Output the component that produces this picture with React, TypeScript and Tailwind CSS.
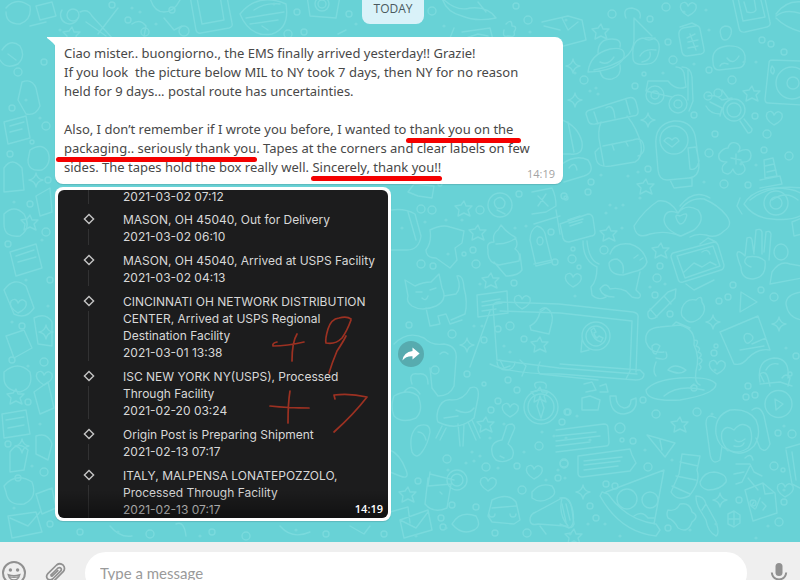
import React from 'react';

/* Large wallpaper drawings, in wallpaper coordinates. */
const doodles: string[] = [
  // phone, top centre
  'M190 -4l6 34q1 4 5 3l28-5q4-1 3-5l-6-31M197 -2l5 26 22-4-4-24',
  // wrench cross
  'M80 12q8-4 12 4l22 24M98 34l20-26M86 22l20 14M62 10a9 9 0 1 0 16 8',
  // melon
  'M240 14q18-22 46-10q4 24-14 30q-22 4-32-20M246 18l38-6M250 24l28-4M254 10q12-8 26-6',
  // camera
  'M307 -4l3 20 26 2 4-22M315 4a7 7 0 1 0 14 0a7 7 0 1 0-14 0M318 4a4 4 0 1 0 8 0a4 4 0 1 0-8 0',
  // mouse
  'M442 -2q14 14 28 10q18-2 26 10q-20 4-34-2q-16-4-20-18M478 2l8 10',
  // envelope
  'M462 32l28-4 3 12M466 38l12-4 10 2M454 28l-4 10M506 24q6-6 6 2q6 0 2 6q2 6-6 4q-6 2-4-6',
  // hat and basket
  'M542 22l26-6 14 4 4 20-30 8M562 18l6 12 10-8M544 26l16 4',
  // ufo
  'M588 72q2-18 22-23q16-3 14 8q-6 14-36 15M598 53q0-14 14-14q10 0 8 8M600 71q2 10 12 8q10-3 8-14M600 62q8 4 14-5',
  // cherry
  'M634 18l0 22q0 22-40 30M634 18l18 18M626 18q-4-10 6-10q10 2 8 10M633 58q-2-20 12-20q16-2 14 12q-2 14-12 14q-14 2-14-6M640 56q4-8 16-6M643 38q6 4 12 0M642 62q10-2 8-10',
  // soda can
  'M679 36l3 16q1 4 5 4l14-2q4-1 3-5l-4-20q-1-4-5-3l-12 2q-5 2-4 8M680 27l12-4 6 3M687 38l8-4M688 42l10-2M688 48l10-2M690 34l6 16',
  // tablet
  'M732 -4l7 32q1 5 6 4l22-5q4-1 3-5l-6-28M738 -2l5 23 22-4-5-21M744 2l3 10q7 2 9-2l-2-12',
  // shell
  'M776 14q10-14 26-12M776 16q10-8 26-2M776 18q10 10 26 14',
  // brain
  'M713 62q-2-14 14-16q16-1 18 10q1 12-8 12l-18 2q-6 0-6-8M727 58q6 8 12-2M720 66q2-4 8-2',
  'M721 36q-3-8 4-10q8 0 6 8q-2 6-6 6q-3 0-4-4',
  // record player
  'M802 61l-30-1q-3 0-3 3l-4 36q0 4 3 4l34 2M776 83a16 16 0 1 0 32 0a16 16 0 1 0-32 0M787 83a6 6 0 1 0 12 0a6 6 0 1 0-12 0M772 66q4 4 1 8q-4-2-1-8',
  // roller skate
  'M648 81l20 0q8 10 18 6l-2-14q-2-6-8-6M648 81l-2 10 26 6M646 95a9 9 0 1 0 18 0a9 9 0 1 0-18 0M669 104a9 9 0 1 0 18 0a9 9 0 1 0-18 0M651 95a4 4 0 1 0 8 0a4 4 0 1 0-8 0M674 104a4 4 0 1 0 8 0a4 4 0 1 0-8 0M682 67q9 0 10 10l1 24-4 10M688 70l0 30',
  // backpack
  'M590 110l38-12q6-2 8 4l2 8q1 6-5 6l-38 8q-6 1-7-4l-2-6q0-3 4-4M594 112l4 12M626 100l4 14M606 108q6-4 8 4l1 6',
  'M601 122q-4 10-1 22l4 22M627 116q10 12 14 28q2 14-6 18l-24 4q-14 2-15-8l-1-6 4-4M603 146l30-6q10-4 11 8q0 6-6 8M612 144l2 6M626 142l2 4',
  // astronaut
  'M660 140a13 13 0 1 0 28 0a13 13 0 1 0-28 0M656 146q-2-22 18-25q20-1 22 20l3 24q0 12-10 13l-22 2q-8 0-9-10zM664 141q4-6 8-1q4-5 7 1l-7 6zM688 148l8-1 3 14q-2 10-9 8zM670 180l4 8 18-2 0-8',
  // ladle and gear
  'M708 96q8-2 14 4l10-2M710 102l12 6-2 8M706 106q4 8 14 8M722 90l6 8M723 110a11 11 0 1 0 22 0a11 11 0 1 0-22 0M727 110a7 7 0 1 0 14 0a7 7 0 1 0-14 0M740 121l8 12q4 0 4-4l-8-10M704 96a4 4 0 1 0 8 0a4 4 0 1 0-8 0M714 93a4 4 0 1 0 8 0a4 4 0 1 0-8 0',
  // flower
  'M728 148q2-8 10-4q4 4 0 8q12-6 13 3q0 8-10 7q8 8 0 12q-6 2-8-5q-4 8-10 3q-3-6 4-10q-10 0-8-8q4-6 9-6M731 158l10 2M736 154l0 10',
  // lighthouse
  'M764 160l9-2 4 18-12 2zM765 166l9-2M767 172l9-2M760 180l20-4 2 8-22 4M750 200q20-16 52-12M772 200q14-10 26 0',
  // surf board and pumpkin, beside the bubble
  'M562 120q16 6 20 22q2 14-12 12l-8 0M568 122l6 30M562 164q14-10 26-4q8 12-4 16l-20 6M569 168q6-8 8 2',
  // book
  'M560 224l28-10q4 0 5 4l2 14q0 4-4 4l-22 6q-5 0-6-4zM568 220l12-4M569 223l14-4M570 226l12-4',
  'M534 224l26-8M556 210l4 24',
  // heart hands
  'M634 226q10-16 24-25q12-2 20 12q10-16 26-14q14 6 22 16q8 10-2 16q-8 8-18 4q-10-2-16 2M634 226q2 14 16 8q16-4 30 2M681 236q-16-6-17-16q1-12 14-7q8-10 20-3q8 10-4 20zM678 222q-5-9 2-6q9-5 6 2q-2 6-6 6zM680 206q14-18 30-8',
  // donut eye
  'M744 204q8-14 30-16q20 0 28 6M744 204q10 14 28 15q20 2 30-4M764 203a12 12 0 1 0 24 0a12 12 0 1 0-24 0M770 203a6 6 0 1 0 12 0a6 6 0 1 0-12 0M740 198l-3 8 5 8',
  // puppy
  'M583 241q0 20 14 26q0 14-6 20l1 8q6 6 14 2M587 241q2 20 12 23M610 254q4-12 20-10q14 4 17 18q-2 8-14 10l-10 3q-14 0-14-12q2-4 8-4q8 4 6 14M640 272l-4 18 4 4q2 6-8 3l-6-6q-8-4-16-2q-4-8-10 0q2 8 14 8M634 258l4-3M640 260l3-2',
  // photo frame
  'M673 253l41-11q3 0 4 3l6 20q0 4-3 5l-38 12q-4 1-5-3l-7-22q0-3 2-4M677 256l36-10 7 20-35 12zM684 272l10-9 8 4 8-5 6 3M702 252q6-4 8 2M686 284l8 6 20-10M700 244l8-6 8 4',
  // rock sign hand
  'M745 256l2-18q4-2 5 2l2 14M754 252l2-22q5-2 6 2l0 22M764 252l2-20q4-2 5 2l-2 26M745 256q-8-8-8-1q2 8 4 12q0 12 12 12q14-2 12-18q-6-6-18-4q-6 6 4 10',
  // person
  'M774 252a7 8 0 1 0 14 0a7 8 0 1 0-14 0M770 284l2-12q8-12 18-8l12 2M770 284l32-6',
  // box and jar
  'M802 218l-10 4 2 14 8-2M802 292q-16 2-16 12q2 14 16 16',
  // laptop
  'M490 311l-20 56M493 306q1-4 6-4l60 2 74 8q6 1 5 6l-2 54M500 311l60 2 72 8-2 50-4 8M493 306l4 54 62 8 78 6M490 364q20 10 70 10l76 6q8 0 8-6l-4-4-80-6',
  'M582 336a14 14 0 1 0 28 0a14 14 0 1 0-28 0M586 336a10 10 0 1 0 20 0a10 10 0 1 0-20 0M582 340l-1 12 8-2M591 330q2 10 10 12l2-4-4-2-2 2q-3-2-3-5l2-1-2-4z',
  // pencil
  'M648 312l20-20 8-3-1 9-20 20q-8 3-7-6M650 309l7 8M664 296l7 8',
  // lemon
  'M682 308q4-10 14-8q6-6 6 2q6 8-2 16q-10 8-16 0q-4-2-2-10',
  // play
  'M741 292l16 10-17 10z',
  // dino
  'M646 342q-2-14 14-15l20-2q16 4 14 20q6 12 2 26q-2 12 4 14M646 342q4 12 18 10M652 346q4-4 8 0l-4 8q-4 0-4-8M666 352q4 10-10 6M656 362q-4 10 0 14M668 370q6-8 18 0q-6 6-18 0M672 326l4-4 14 6M694 340q6 0 2 6q6 2 2 6q6 2 1 6q6 2 0 6q4 4 0 6',
  // map
  'M720 332l38-16 12 34q-12-2-22 8q-6 8-14 6zM744 338q0-6 6-4q6 4 0 8q-4 4-6-4M752 344l14-6M740 350l24-4',
  // headphones
  'M760 382q-4-22 14-24q16 0 14 20M764 382l-4-8q6-4 8 4l2 8M782 378q4-6 8 0l-2 8M766 370q4-8 12-6',
  // t-shirt bird
  'M426 250q6-8 4-20q12-6 20-3l14 4-2 12-7 5 2 12-7 8-14-10q-10 0-10-8',
  // cupcake
  'M488 250q-2-8 6-8q-2-8 4-12l3-5q6 8 14 12q4 8 0 12q6 4 4 12l-20 4q-12-2-11-15M494 262l12 14q12 0 16-6l-2-16M496 244q12 0 20-6',
  // crayon
  'M530 240q0-10 7-14q8 2 9 12l6 24-16 4zM537 241a3 4 0 1 0 6 0a3 4 0 1 0-6 0M534 264l18-4',
  // cat
  'M408 296l-3-16 10 6q8-4 16-4l8-8 3 14q6 12-6 18q-14 6-24 0q-6-4-4-10M416 292l6 0M430 290l6-2M422 298q4 4 6-2M444 296l12-2q6-6 1-18q6-2 7 12q4 14 1 26l-14 6M426 308l4 18 10-2-2-8 8-2 4 10 12-4',
  // note and frame
  'M477 295l30-4 1 22-30 4zM482 302l18-3M482 306l20-3M482 311l14-2',
  // bell
  'M530 326q8-4 10-14l6-4q8 4 6 14l-3 12-18-4zM540 310q4-4 8-1',
  // medal and gem
  'M488 205a11 11 0 1 0 24 0a11 11 0 1 0-24 0M495 200q6-6 10 2q0 8-8 6q-4-4-2-8M497 210l8 4',
  'M532 192l20-4q4 8 4 18l-10 6-14 2M538 196l10 10M546 194l-8 12M408 192l6-8 20 2-2 12-14-2z',
  // bread
  'M391 210q14-2 24 4l6 22q-2 14-14 14l-16 0M408 212l8 28',
  // bull
  'M394 344q14-14 30-6q8 8 20 6q14 2 12 16l-2 26q-4 10-16 10l-6-8-2-20M440 354q4-4 8 0',
  // pot
  'M394 396q14-8 24 0q6 14-2 22q-14 6-22-2q-4-10 0-20M412 384q-4-12 6-10q10-2 10 10M404 392q8-10 16 2',
  // chair
  'M438 410q4-12 14-10q12 0 18-12q10-4 8 10l-4 20q-16 14-36 4q-2-4 0-12M444 418l14-2M456 410q12 6 18-2M442 426l-6 12M446 428l-6 12M458 424l2 22M464 424l-1 22M468 422l8 18M472 420l8 18',
  // compass
  'M524 407a17 17 0 1 0 34 0a17 17 0 1 0-34 0M528 407a13 13 0 1 0 26 0a13 13 0 1 0-26 0M540 396l4 12-3 10-4-12zM536 388q-4-6 4-6q8 0 6 6',
  // guitar
  'M492 452q-2-10 10-12l4-12q0-4 6-4q4 2 2 6l-6 14q8 6 4 14q-8 6-16 2q-4-4-4-8M500 456l4 2',
  // lamp
  'M497 362a9 8 0 1 0 18 0M500 360l4 8 6-2M520 360l6 6-4 10',
  // flip flops
  'M412 452q-4-18 6-26q12-4 12 6q-2 12-8 20q-6 8-10 0M418 432q6 0 8 8M390 450q10 4 16 20q4 10-6 6l-10-4',
  // drink
  'M428 478l-3 26q8 10 22 4l4-24M430 472l-2 14 24-2M430 474l24 6M447 480a10 10 0 1 0 20 0a10 10 0 1 0-20 0M451 480a6 6 0 1 0 12 0a6 6 0 1 0-12 0M440 492l2 2',
  // camper
  'M488 516l4-16q16-8 24 2q2 8 4 18l-6 4-22-2zM492 508l24-2M489 514a3 3 0 1 0 6 0M510 514a3 3 0 1 0 6 0',
  // megaphone
  'M530 520q0-6 6-8l26-14q8-2 10 12l2 14q-2 6-8 2l-28-2q-8 2-8-4M562 498q-4 16 6 28M540 526l6 8M566 504l4 16',
  // stone
  'M532 492q8-10 20-6q6 8-2 12q-10 6-18 0zM452 524q8-14 24-8q6 10-2 14q-12 6-22-6',
  // cube box
  'M390 512l18-5 2 16M400 520l28-10 4 20-28 8zM400 520l16 8 12-16',
  // books
  'M540 362q-4 8 0 12l58 6M556 430l48-6q4 0 4 4l1 14q0 4-3 4l-50 6M556 436l40-4M556 441l44-5M556 446l34-4',
  'M578 456l52-7 2 6 4 8-6 8-48 6q-4 0-4-4zM584 461l38-4M584 465l36-4M584 470l34-4',
  'M584 384l8-2 4 8-10 2M600 386l6-2 2 8-8 0M582 398l8-2 10 4-2 10-16 0z',
  // horse shoe
  'M610 396q0 18 14 18q14-2 12-16l-5 2q0 8-7 8q-8-2-8-12z',
  // plate
  'M646 390q8-10 34-12q30-2 36 6q0 10-36 16q-34 2-34-10M664 396q14-12 40-6M690 388l4-4',
  // party cone
  'M647 435l28 8-10 14zM660 440l2 10',
  // sloth
  'M716 434q-2-18 14-24q18-2 26 10q6 14-2 26q-12 12-26 4q-10-4-12-16M722 432q4-8 12-2q8-10 16-2q4 12-2 20q-12 8-22 0q-6-8-4-16M735 440q4 4 10-1M734 446q8 2 10-3M716 418q-10-6-10 6l4 30q2 12 10 6l2-14M752 410q8-6 12 6l6 28q-4 10-10 4l-4-10',
  // play disc
  'M765 404a13 13 0 1 0 27 0a13 13 0 1 0-27 0M775 399l8 5-7 6zM760 384l20-2 12 4',
  // pizza
  'M600 496q20 36 56 40l4-6-4-6q-30-4-48-30l-6-2zM606 492l58-22-10 54M617 499a10 10 0 1 0 20 0a10 10 0 1 0-20 0M642 500a8 8 0 1 0 16 0a8 8 0 1 0-16 0M634 516q8-6 14 2l6 0',
  // sock
  'M682 454l18 2-3 14q4 12-8 26q-12 6-18-4l8-18zM680 462l18 4M676 476l20 4M672 486l18 8',
  // fried egg, mitten
  'M700 482q4-10 14-10q14 2 12 10q-6 8-18 8q-8-2-8-8M668 510q8 2 12-6q10-2 12 8q8 4 0 10q-4 12-14 6q-4-8-10-10q-2-4 0-8',
  // brush
  'M696 496q8 0 10 8l10 18q4 12 0 14q-8-4-10-16l-6-10q-4-6-4-14M706 504l-4 6',
  // runner
  'M745 458q6-6 8 2M736 464l14 0 4 8 8 4M750 466l-8 16-6 2M748 478l10 12M734 474l10-2',
  // document
  'M745 490l18-7 12 10 2 20-24 8zM763 484l2 10 8-1M754 502l-3 4 4 3M762 502l4 4-3 4M756 508l4-10',
  // sugar
  'M728 514l6-3 6 4 0 8-6 4-6-3zM734 511l0 14M728 519l12 0M560 498q10-2 13 14q2 14-4 16l-9-4M562 504l4 18',
  'M786 448l14-4M786 450l6 34 8 4M792 452l4 28',
  // left edge
  'M2 50q8-12 18-4q6 10-2 18q-12 6-18-4M8 54l8 6M22 82q10-4 14 6l4 18q-4 10-14 8l-8-14zM4 122l22-6 4 22-22 6zM10 126l14-4M10 132l12-3',
  'M30 150q12-8 18 2q4 12-6 18q-14 2-14-10zM4 168q8-12 18 0l2 22-20 2zM36 196l14-8 2 24-12 4z',
  'M4 214q10-10 20 0q8 14-4 22q-16 2-16-12zM10 252l26-8 6 24-26 8zM16 256l18-6M18 262l18-5M4 290q10-14 22-4l8 22q-8 12-20 6z',
  'M34 318q12-6 18 4l0 24-14-2zM6 336l18-6 8 18-18 10zM4 372q14-12 26 0q4 16-10 20q-16-2-16-14zM34 392l14-10 6 26-14 6z',
  'M2 414l24-4 4 24-26 4zM6 420l18-3M8 428l16-3M10 452q8-12 18-2l-4 20-14 2zM36 436q12-4 16 8l-4 16-12-6z',
  'M4 486q12-14 28-4q6 16-8 22q-16 2-18-12zM36 494l16-6 4 20-14 6zM8 516l28-4 6 20-30 6zM10 518l18 8 12-14',
  'M6 8q10-12 24-2q2 14-10 18q-14 0-14-12M30 26l16-4M36 6l16-4 4 14-16 4z',
  'M150 -2q4 14 14 14t16-12M164 18l10 12 8-4M132 24q8-6 14 2l-2 10M262 26l6 4M346 30l-8 4M110 526q10 12 22 10M176 524q8-4 10 12M280 526q12 14 30 6M350 526l14 8 6-8',
];

/* Small rings: x, y, radius. */
const rings: number[][] = [
  [612, 14, 4], [650, 19, 3], [666, 7, 4], [668, 42, 3], [673, 60, 4], [584, 80, 4], [635, 86, 3], [644, 74, 2], [709, 70, 3], [732, 80, 4],
  [762, 40, 3], [771, 44, 3], [784, 52, 3], [694, 115, 3], [755, 116, 3], [767, 134, 4], [709, 153, 4], [715, 134, 3], [764, 150, 3], [789, 156, 4],
  [724, 184, 4], [748, 185, 3], [591, 182, 3], [648, 169, 3], [588, 192, 3], [564, 196, 3], [604, 250, 4], [572, 259, 4], [579, 267, 2], [573, 249, 2],
  [660, 266, 3], [657, 278, 4], [655, 295, 3], [733, 285, 3], [761, 290, 3], [728, 297, 3], [719, 301, 3], [774, 297, 4], [670, 314, 3], [748, 386, 3],
  [746, 397, 3], [755, 395, 3], [694, 388, 3], [697, 412, 4], [620, 428, 5], [643, 400, 3], [656, 414, 4], [633, 441, 3], [622, 440, 2], [564, 464, 4],
  [568, 412, 3], [648, 467, 4], [774, 466, 4], [783, 470, 2], [792, 434, 4], [778, 433, 3], [606, 484, 3], [615, 486, 3], [590, 506, 3], [596, 518, 3],
  [668, 528, 3], [739, 500, 3], [753, 503, 3], [779, 522, 4], [784, 502, 3], [421, 209, 4], [432, 210, 4], [480, 210, 4], [519, 194, 3], [473, 250, 3],
  [476, 264, 4], [421, 264, 4], [433, 266, 3], [464, 254, 2], [514, 283, 3], [409, 325, 3], [510, 326, 4], [498, 329, 3], [452, 334, 4], [484, 340, 3],
  [524, 339, 3], [551, 232, 3], [555, 262, 3], [566, 198, 2], [435, 370, 4], [467, 374, 3], [508, 380, 3], [517, 390, 3], [498, 401, 3], [491, 410, 3],
  [484, 384, 2], [567, 412, 3], [562, 422, 3], [539, 446, 4], [486, 467, 4], [517, 466, 3], [522, 490, 4], [564, 463, 4], [558, 478, 3], [447, 459, 4],
  [418, 481, 3], [452, 505, 3], [441, 518, 3], [443, 527, 3], [476, 507, 3], [495, 533, 3], [527, 533, 4], [73, 15, 6], [128, 20, 3], [145, 32, 4],
  [172, 10, 3], [184, 31, 5], [288, 34, 4], [297, 12, 3], [304, 32, 3], [432, 11, 4], [528, 20, 4], [516, 6, 3], [349, 14, 3], [112, 5, 3],
  [18, 72, 4], [44, 62, 3], [12, 108, 3], [46, 126, 4], [32, 142, 2], [10, 154, 3], [48, 180, 3], [30, 204, 3], [46, 232, 4], [8, 244, 3],
  [50, 280, 3], [22, 326, 3], [44, 362, 4], [12, 360, 3], [28, 402, 3], [8, 444, 3], [44, 472, 4], [18, 478, 3], [50, 524, 3], [80, 532, 3],
  [150, 534, 4], [212, 532, 3], [246, 536, 4], [326, 534, 3], [384, 534, 3], [440, 184, 2], [790, 374, 2], [796, 356, 3], [716, 346, 2], [714, 353, 3],
];

/* Filled specks. */
const specks: number[][] = [
  [566, 20], [575, 73], [590, 91], [598, 94], [596, 88], [663, 73], [694, 64], [709, 30], [756, 62], [684, 12], [706, 10], [744, 62],
  [601, 175], [638, 172], [628, 176], [704, 182], [756, 165], [741, 164], [606, 213], [610, 205], [616, 208], [623, 205], [622, 228], [640, 198],
  [665, 284], [650, 287], [575, 296], [715, 370], [786, 348], [712, 414], [577, 416], [590, 440], [645, 450], [672, 460], [728, 450], [784, 426],
  [565, 478], [588, 524], [605, 524], [690, 530], [768, 526], [756, 538], [784, 490], [402, 228], [425, 222], [446, 220], [462, 220], [480, 284],
  [526, 226], [448, 254], [515, 228], [474, 326], [482, 326], [504, 346], [510, 352], [524, 452], [490, 438], [504, 424], [472, 452], [480, 456],
  [474, 461], [466, 463], [448, 470], [554, 436], [542, 432], [558, 470], [566, 438], [446, 528], [498, 468], [546, 480], [132, 8], [156, 24],
  [140, 12], [274, 4], [356, 24], [444, 26], [530, 32], [60, 30], [26, 100], [40, 118], [14, 202], [42, 240], [26, 280], [48, 306],
  [12, 322], [28, 366], [40, 424], [32, 466], [14, 508], [118, 532], [200, 536], [296, 530], [416, 536], [570, 534], [620, 536], [716, 524],
];

/* Stars, sparkles and hearts. */
const stars = [[601, 31], [752, 93], [478, 232], [491, 280], [609, 233], [661, 250], [486, 424], [408, 494], [646, 186], [680, 424], [464, 208], [540, 344], [540, 394], [574, 536], [30, 222], [16, 396], [72, 34]];
const sparkles = [[573, 66], [575, 100], [648, 120], [713, 322], [779, 324], [583, 492], [720, 500], [467, 345], [36, 180], [46, 332], [22, 446]];
const hearts = [[688, 9], [774, 118], [573, 280], [717, 367], [522, 302], [510, 410], [534, 472], [488, 484], [785, 490], [18, 306], [44, 378]];

function Wallpaper() {
  return (
    <svg
      className="absolute inset-0 -z-10 h-full w-full"
      viewBox="0 0 800 542"
      preserveAspectRatio="xMidYMid slice"
      fill="none"
      stroke="#7adadd"
      strokeWidth="1.4"
      strokeLinecap="round"
      strokeLinejoin="round"
      aria-hidden="true"
    >
      {doodles.map((d, i) => (
        <path key={i} d={d} />
      ))}
      {rings.map(([x, y, r], i) => (
        <circle key={i} cx={x} cy={y} r={r} />
      ))}
      {specks.map(([x, y], i) => (
        <circle key={i} cx={x} cy={y} r="1.6" fill="#77d8db" stroke="none" />
      ))}
      {stars.map(([x, y], i) => (
        <path key={i} d={`M${x} ${y - 7}l2 5 6 0-4 4 2 6-6-3-6 3 1-6-4-4 6-1z`} />
      ))}
      {sparkles.map(([x, y], i) => (
        <path key={i} d={`M${x} ${y - 7}q1 6 7 7q-6 1-7 7q-1-6-7-7q6-1 7-7z`} />
      ))}
      {hearts.map(([x, y], i) => (
        <path key={i} d={`M${x} ${y + 7}q-10-6-7-12q5-4 7 2q4-6 8-1q2 6-8 11z`} />
      ))}
    </svg>
  );
}

/* Text with a thick red stroke under it; `reach` sets how far the stroke runs past each end. */
function Marked({ reach, children }: { reach: string; children: React.ReactNode }) {
  return (
    <span className={`relative after:absolute after:top-full after:h-[5px] after:rounded-full after:bg-[#f50000] ${reach}`}>
      {children}
    </span>
  );
}

const events: string[][] = [
  ['MASON, OH 45040, Out for Delivery', '2021-03-02 06:10'],
  ['MASON, OH 45040, Arrived at USPS Facility', '2021-03-02 04:13'],
  ['CINCINNATI OH NETWORK DISTRIBUTION', 'CENTER, Arrived at USPS Regional', 'Destination Facility', '2021-03-01 13:38'],
  ['ISC NEW YORK NY(USPS), Processed', 'Through Facility', '2021-02-20 03:24'],
  ['Origin Post is Preparing Shipment', '2021-02-13 07:17'],
  ['ITALY, MALPENSA LONATEPOZZOLO,', 'Processed Through Facility', '2021-02-13 07:17'],
];

function TrackingPhoto() {
  return (
    <div className="relative flex flex-col gap-[7px] overflow-hidden rounded-md bg-[#1c1c1d] font-['Inter','Liberation_Sans',sans-serif] text-xs leading-[17px] text-[#d8d8d8]">
      <div className="flex leading-[14px]">
        <div className="flex w-[65px] shrink-0 justify-center pr-1">
          <div className="w-px bg-[#323233]" />
        </div>
        2021-03-02 07:12
      </div>
      {events.map((lines, i) => (
        <div key={i} className="flex">
          <div className="flex w-[65px] shrink-0 flex-col items-center pr-1">
            <svg className="mt-[2px] h-3 w-3 shrink-0" viewBox="0 0 12 12" fill="none" stroke="#c4c4c4" strokeWidth="1.4" aria-hidden="true">
              <path d="M6 1.4L10.6 6 6 10.6 1.4 6z" />
            </svg>
            <div className="mt-1 w-px grow bg-[#323233]" />
          </div>
          <div>
            {lines.map((line) => (
              <div key={line} className="whitespace-nowrap">
                {line}
              </div>
            ))}
          </div>
        </div>
      ))}
      <div className="absolute inset-x-0 bottom-0 h-7 bg-gradient-to-t from-black/40 to-transparent" />
      <svg className="absolute inset-0 h-full w-full" viewBox="0 0 330 328" fill="none" stroke="#9c3122" strokeWidth="1.7" strokeLinecap="round" strokeLinejoin="round" aria-hidden="true">
        <path d="M219 152q-5 1-4 4q14 0 31-4M239 144q-5 8-5 27" />
        <path d="M293 129q-4-3-12-1-8 1-11 11-3 10-2 14 9 2 16-5 5-7 9-18M288 146q-3 6-9 15-5 12-8 22" />
        <path d="M212 216q18 2 39 2M232 201q-2 12-2 32" />
        <path d="M277 209l-1-4q16-2 33 2-13 17-33 35" />
      </svg>
      <span className="absolute right-[5px] bottom-px font-['Open_Sans',sans-serif] text-[11px] leading-4 font-semibold text-white">14:19</span>
    </div>
  );
}

export default function App() {
  return (
    <div className="flex h-screen flex-col overflow-hidden bg-[#efefef] font-['Noto_Sans','Open_Sans',sans-serif]">
      <main className="relative isolate flex shrink-0 flex-col overflow-hidden bg-[#68d2d6] pr-10 pb-[21px] pl-[55px]">
        <Wallpaper />
        <div className="-mr-10 -ml-[55px] flex justify-center pb-[13px]">
          <span className="-ml-[14px] rounded-b-lg bg-[#d9f2f9] px-3 pb-[7px] font-['Open_Sans',sans-serif] text-xs leading-[17px] text-[#4a5a60]">TODAY</span>
        </div>

        <article className="relative mb-[3px] max-w-[508px] rounded-lg rounded-tl-none bg-white px-[9px] py-[7px] text-[13px] leading-[19px] text-[#484848] shadow-[0_1px_1px_rgba(0,0,0,0.12)]">
          <svg className="absolute top-0 -left-2 h-[10px] w-[9px]" viewBox="0 0 9 10" fill="#ffffff" aria-hidden="true">
            <path d="M0 0H9V10Q7 6 0 1z" />
          </svg>
          <p className="whitespace-pre-wrap">
            Ciao mister.. buongiorno., the EMS finally arrived yesterday!! Grazie!
            <br />
            {'If you look  the picture below MIL to NY took 7 days, then NY for no reason'}
            <br />
            held for 9 days... postal route has uncertainties.
          </p>
          <p className="mt-[19px]">
            Also, I don’t remember if I wrote you before, I wanted to{' '}
            <Marked reach="after:-left-1 after:-right-2">thank you on the</Marked>
            <br />
            <Marked reach="after:-left-2 after:-right-px">packaging.. seriously thank you</Marked>. Tapes at the corners and clear labels on few
            <br />
            sides. The tapes hold the box really well. <Marked reach="after:-left-px after:-right-px">Sincerely, thank you!!</Marked>
          </p>
          <time className="absolute right-2 bottom-[2px] font-['Open_Sans',sans-serif] text-[11px] leading-4 text-[#a3a3a3]">14:19</time>
        </article>

        <div className="flex items-center gap-[7px]">
          <div className="w-[336px] rounded-lg bg-white p-[3px] shadow-[0_1px_1px_rgba(0,0,0,0.12)]">
            <TrackingPhoto />
          </div>
          <button type="button" aria-label="Forward" className="grid h-[26px] w-[26px] place-items-center rounded-full bg-[#57abaf]">
            <svg className="h-5 w-5" viewBox="0 0 20 20" fill="#ffffff" aria-hidden="true">
              <path d="M11.5 3.4L18.6 9.6 11.5 15.6V12.2Q5 11.8 1.4 16.4 2.6 8 11.5 6.9z" />
            </svg>
          </button>
        </div>
      </main>

      <footer className="flex shrink-0 items-center py-[10px] pr-2">
        <button type="button" aria-label="Emoji" className="ml-px shrink-0">
          <svg className="h-[26px] w-[26px]" viewBox="0 0 26 26" fill="none" stroke="#919191" strokeWidth="2" aria-hidden="true">
            <circle cx="13" cy="13" r="11" />
            <circle cx="9.4" cy="10" r="1.7" fill="#919191" stroke="none" />
            <circle cx="16.6" cy="10" r="1.7" fill="#919191" stroke="none" />
            <path d="M7.2 14.6Q13 16.6 18.8 14.6 17.6 20 13 20T7.2 14.6zM8 16.6q5 1.4 10 0" strokeWidth="1.4" />
          </svg>
        </button>
        <button type="button" aria-label="Attach" className="mr-[18px] ml-4 shrink-0">
          <svg className="h-6 w-6" viewBox="0 0 24 24" fill="none" stroke="#919191" strokeWidth="1.7" strokeLinecap="round" strokeLinejoin="round" aria-hidden="true">
            <path d="M8.4 13.6L15 7q1.8-1 2.9.2 1 1.2-.1 2.7L9.6 18q-2.8 2-5-.1-2-2.3 0-5L13.6 4q3.4-2.6 6.6.2 2.6 3.2 0 6.500L11.5 19.400" />
            <path d="M8.4 13.6q-1 1.4.6 1.6L14.8 9.600" />
          </svg>
        </button>
        <input
          aria-label="Message"
          placeholder="Type a message"
          className="h-[42px] min-w-0 grow rounded-full bg-white px-[15px] font-['Lato','Open_Sans',sans-serif] text-[15px] text-[#4a4a4a] outline-none placeholder:text-[#9a9a9a]"
        />
        <button type="button" aria-label="Record voice message" className="mr-px ml-5 shrink-0">
          <svg className="h-6 w-6" viewBox="0 0 24 24" fill="none" stroke="#919191" strokeWidth="2" aria-hidden="true">
            <rect x="8.500" y="2" width="7" height="13" rx="3.500" fill="#919191" stroke="none" />
            <path d="M4.800 11.500q.6 6.600 7.200 6.900 6.600-.3 7.200-6.900M12 18.400V22" />
          </svg>
        </button>
      </footer>
    </div>
  );
}
